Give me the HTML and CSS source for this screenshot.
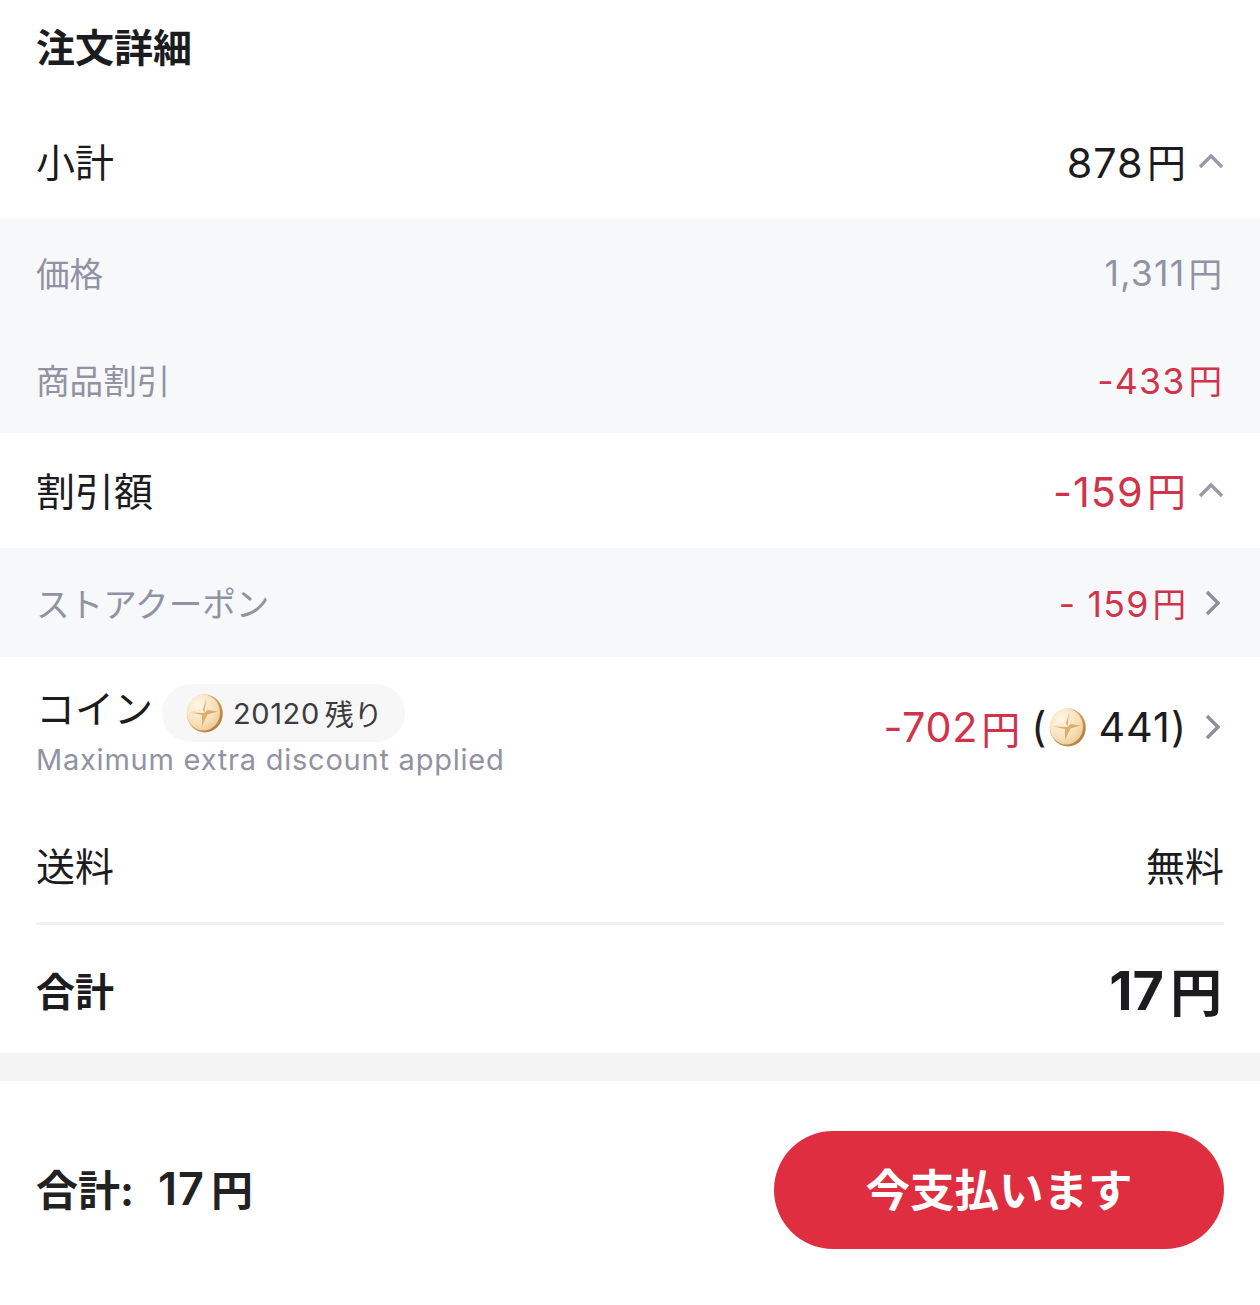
FILE: index.html
```html
<!DOCTYPE html>
<html lang="ja">
<head>
<meta charset="utf-8">
<title>注文詳細</title>
<link rel="stylesheet" href="styles.css">
</head>
<body>
<svg class="defs" width="0" height="0" aria-hidden="true">
  <defs>
    <radialGradient id="coinFace" cx="35%" cy="30%" r="85%">
      <stop offset="0" stop-color="#fff6e6"/>
      <stop offset="0.6" stop-color="#f8e0b8"/>
      <stop offset="1" stop-color="#ecc288"/>
    </radialGradient>
    <linearGradient id="coinEdge" x1="0" y1="0" x2="1" y2="1">
      <stop offset="0" stop-color="#e8c48e"/>
      <stop offset="1" stop-color="#a87634"/>
    </linearGradient>
    <symbol id="coin" viewBox="0 0 38 40">
      <ellipse cx="19.8" cy="20.5" rx="18" ry="19" fill="url(#coinEdge)"/>
      <ellipse cx="18.4" cy="19.6" rx="16.6" ry="18" fill="url(#coinFace)"/>
      <path d="M21 6 L22.5 17 L33 18.5 L22.5 21.5 L17 33 L17 22 L5.5 19.5 L18 16.5 Z" fill="#dfae6c"/>
      <path d="M21 6 L22.5 17 L19.5 20 Z M5.5 19.5 L18 16.5 L19.5 20 Z" fill="#fff0d6"/>
    </symbol>
  </defs>
</svg>
<main class="page">
  <h1 class="title">注文詳細</h1>

  <div class="row row-main row-subtotal">
    <span>小計</span>
    <span class="value"><span class="num">878</span>円<svg class="chev" viewBox="0 0 26 16"><path d="M2 14 L13 3 L24 14"/></svg></span>
  </div>
  <div class="sub-group group-price">
    <div class="row row-sub"><span>価格</span><span class="value end"><span class="num">1,311</span>円</span></div>
    <div class="row row-sub"><span>商品割引</span><span class="value end red"><span class="num">-433</span>円</span></div>
  </div>
  <div class="row row-main row-discount">
    <span>割引額</span>
    <span class="value red"><span class="num">-159</span>円<svg class="chev" viewBox="0 0 26 16"><path d="M2 14 L13 3 L24 14"/></svg></span>
  </div>
  <div class="sub-group">
    <div class="row row-sub row-store">
      <span>ストアクーポン</span>
      <span class="value red"><span class="num">- 159</span>円<svg class="chev-right" viewBox="0 0 16 26"><path d="M3 2 L14 13 L3 24"/></svg></span>
    </div>
  </div>
  <div class="row row-coin">
    <div class="coin-left">
      <div class="coin-head">
        <span class="coin-label">コイン</span>
        <span class="pill"><svg class="coin-icon"><use href="#coin"/></svg><span class="pill-num">20120</span>残り</span>
      </div>
      <div class="note">Maximum extra discount applied</div>
    </div>
    <div class="coin-right">
      <span class="value red"><span class="num">-702</span>円</span>
      <span class="coin-paren"><span class="num-plain">(</span><svg class="coin-icon"><use href="#coin"/></svg><span class="num-plain">441)</span></span>
      <svg class="chev-right" viewBox="0 0 16 26"><path d="M3 2 L14 13 L3 24"/></svg>
    </div>
  </div>
  <div class="row row-main row-ship"><span>送料</span><span>無料</span></div>
  <div class="row row-total"><span>合計</span><span class="value total-value"><span class="total-num">17</span>円</span></div>
  <div class="band"></div>
  <footer class="footer">
    <div class="footer-total"><span>合計:</span><span class="footer-num">17</span><span>円</span></div>
    <button class="pay" type="button">今支払います</button>
  </footer>
</main>
</body>
</html>
```
FILE: styles.css
```css
* { box-sizing: border-box; }
html, body { margin: 0; padding: 0; background: #fff; }
body {
  font-family: Inter, "Noto Sans CJK JP", sans-serif;
  color: #1c1c1e;
}
.defs { position: absolute; }
.page { width: 1260px; height: 1305px; overflow: hidden; display: flex; flex-direction: column; }
.title {
  margin: 0;
  height: 110px;
  padding: 21px 36px 0;
  font-size: 39px;
  line-height: 54px;
  font-weight: 700;
}
.row { display: flex; justify-content: space-between; align-items: center; padding: 0 36px; }
.row-main { font-size: 39px; line-height: 54px; }
.row-subtotal { height: 108px; padding-bottom: 2px; }
.row-discount { height: 115px; padding-top: 3px; }
.row-ship { height: 110px; }
.value { display: flex; align-items: center; }
.end { margin-right: 2px; }
.num { font-size: 1.06em; letter-spacing: 0.025em; margin-right: 0.08em; }
.num-plain { font-size: 1.06em; letter-spacing: 0.025em; }
.chev { width: 26px; height: 16px; margin-left: 12px; margin-top: -4px; fill: none; stroke: #9a9aa8; stroke-width: 3.4; }
.chev-right { width: 16px; height: 26px; margin-left: 18px; margin-right: 4px; fill: none; stroke: #8e8e9c; stroke-width: 3.4; }
.sub-group { background: #f7f8fa; }
.group-price { height: 215px; }
.row-sub { height: 107.5px; padding-top: 1px; font-size: 33.6px; color: #9192a3; }
.row-sub .num { margin-top: 3px; letter-spacing: 0.035em; }
.row-store { height: 109px; padding-top: 0; }
.red { color: #d0334a; }
.row-coin { height: 155px; padding-bottom: 15px; }
.coin-left { display: flex; flex-direction: column; align-self: flex-start; padding-top: 27px; }
.coin-head { display: flex; align-items: center; }
.coin-label { font-size: 39px; line-height: 54px; margin-top: -9px; }
.pill {
  display: flex; align-items: center;
  margin-left: 9px; height: 58px; padding: 0 22px 0 23px;
  border-radius: 29px; background: #f7f7f7;
  font-size: 29px; color: #3c3c40;
}
.pill .coin-icon { margin-right: 10px; }
.pill-num { letter-spacing: 0.6px; margin-right: 5px; }
.coin-icon { width: 38px; height: 40px; flex: none; }
.note { font-size: 29px; line-height: 38px; margin-top: -1px; color: #9192a3; letter-spacing: 0.77px; }
.coin-right { display: flex; align-items: center; font-size: 39px; }
.coin-right .num { letter-spacing: 0.015em; }
.coin-right .chev-right { margin-left: 17px; }
.coin-paren { display: flex; align-items: center; margin-left: 11px; }
.coin-paren .coin-icon { margin: 0 12px 0 1px; }
.row-total {
  margin: 0 36px; padding: 0;
  height: 131px;
  border-top: 3px solid #f1f1f2;
  font-size: 39px; font-weight: 700;
}
.total-value { font-size: 52px; margin-right: 2px; }
.total-num { font-size: 54px; margin: 2px 6px 0 0; }
.band { height: 28px; background: #f4f4f5; flex: none; }
.footer { display: flex; justify-content: space-between; align-items: center; padding: 50px 36px 0; }
.footer-total { display: flex; align-items: center; font-size: 42px; font-weight: 700; color: #222; margin-top: -6px; }
.footer-num { font-size: 45px; font-weight: 600; letter-spacing: 1px; margin: 3px 6px 0 24px; }
.pay {
  width: 450px; height: 118px; border: 0; border-radius: 59px; padding: 0 0 5px;
  background: #de2e3f; color: #fff;
  font: 700 44.5px Inter, "Noto Sans CJK JP", sans-serif;
}
```
